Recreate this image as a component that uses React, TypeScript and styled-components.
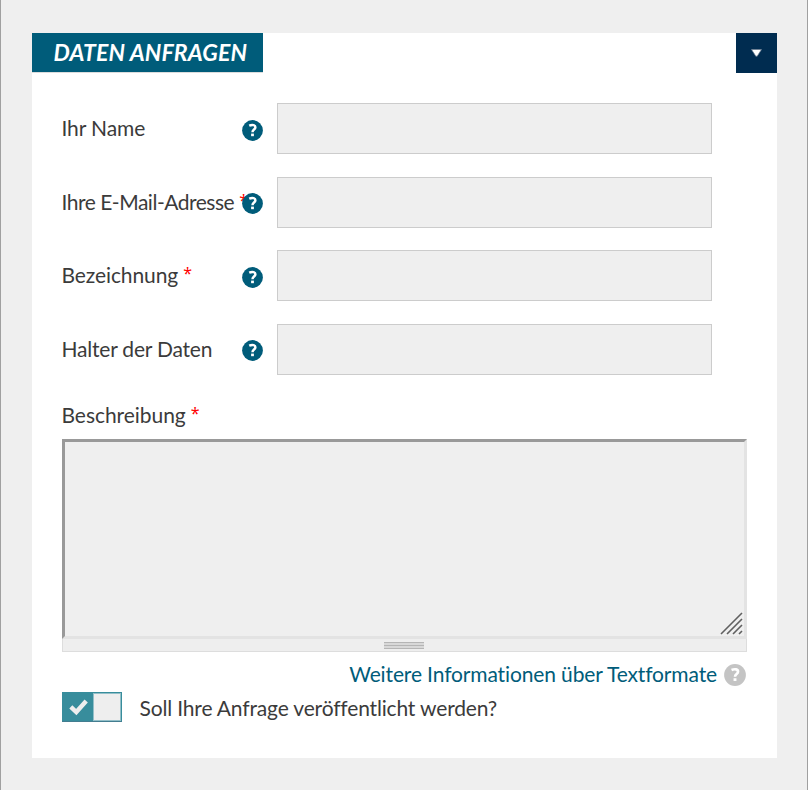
import React from 'react';
import styled, { createGlobalStyle } from 'styled-components';

const GlobalStyle = createGlobalStyle`
  *, *::before, *::after { box-sizing: border-box; }
  body {
    margin: 0;
    background: #efefef;
    color: #3b3b3b;
    font-family: Lato, "Noto Sans", sans-serif;
    font-size: 21px;
  }
`;

const Page = styled.main`
  height: 790px;
  padding: 33px 30px 0 31px;
  border-left: 1px solid #a0a0a0;
  border-right: 1px solid #a0a0a0;
  overflow: hidden;
`;

const Panel = styled.section`
  width: 745px;
  height: 725px;
  background: #fff;
`;

const PanelHeader = styled.header`
  display: flex;
  justify-content: space-between;
  align-items: flex-start;
  height: 70px;
`;

const Title = styled.h2`
  margin: 0;
  width: 231px;
  height: 40px;
  padding-left: 22px;
  background: #005c7a;
  border-bottom: 1px solid #dcdcdc;
  color: #fff;
  font-size: 23px;
  font-weight: 700;
  font-style: italic;
  line-height: 39px;
  white-space: nowrap;
`;

const Toggle = styled.button`
  display: flex;
  align-items: center;
  justify-content: center;
  width: 41px;
  height: 40px;
  padding: 0;
  border: 0;
  background: #002c50;
`;

const Form = styled.form`
  padding: 0 30px;
`;

const Fields = styled.div`
  display: grid;
  row-gap: 22.6px;
`;

const FieldRow = styled.div`
  display: grid;
  grid-template-columns: 180px 35px 435px;
  height: 51px;
`;

const Label = styled.label`
  height: 51px;
  line-height: 49px;
  white-space: nowrap;
`;

const Spaced = styled.span<{ $spacing?: number }>`
  margin-left: -0.5px;
  letter-spacing: ${({ $spacing = 0 }) => $spacing}px;
`;

const Required = styled.span`
  margin-left: 5px;
  color: #f00;
  font-family: "Noto Sans", sans-serif;
  font-size: 16px;
  line-height: 1;
  vertical-align: 4px;
`;

const HelpSlot = styled.span`
  position: relative;
  padding-top: 16.6px;
  line-height: 0;
`;

const Input = styled.input`
  width: 435px;
  height: 51px;
  border: 1px solid #ccc;
  border-radius: 0;
  background: #efefef;
  outline: 0;
`;

const DescriptionLabel = styled.label`
  display: block;
  height: 64px;
  padding-top: 25px;
  line-height: 30px;
`;

const EditorFrame = styled.div`
  position: relative;
`;

const TextArea = styled.textarea`
  display: block;
  width: 685px;
  height: 200px;
  border: 3px solid;
  border-color: #999 #e3e3e3 #e3e3e3 #999;
  background: #efefef;
  resize: none;
  outline: 0;
`;

const Resizer = styled.svg`
  position: absolute;
  right: 3px;
  bottom: 3px;
`;

const Grippie = styled.div`
  display: flex;
  justify-content: center;
  height: 13px;
  padding: 3px 2px 0 0;
  border: 1px solid #ddd;
  border-top: 0;
  background: #eee;
`;

const FormatRow = styled.div`
  display: flex;
  justify-content: flex-end;
  height: 40px;
  gap: 7px;
  padding-right: 1px;
`;

const FormatLink = styled.a`
  height: 44px;
  line-height: 44px;
  color: #005c7a;
  white-space: nowrap;
`;

const FormatHelp = styled.span`
  padding-top: 12px;
  line-height: 0;
`;

const PublishRow = styled.div`
  display: flex;
  gap: 18px;
  height: 30px;
`;

const Switch = styled.span`
  display: flex;
  width: 60px;
  height: 30px;
  background: #388d9c;
  border-bottom: 1px solid #437d90;
`;

const SwitchCheck = styled.span`
  width: 31px;
  height: 29px;
`;

const SwitchKnob = styled.span`
  width: 28px;
  height: 28px;
  margin-top: 1px;
  border: 1px solid #93bfc8;
  background: #eee;
`;

const PublishLabel = styled.label`
  line-height: 31px;
  white-space: nowrap;
`;

function HelpIcon({ size = 21, color = '#005c7a', mark = '#fff' }: { size?: number; color?: string; mark?: string }) {
  return (
    <svg width={size} height={size} viewBox="0 0 21 21">
      <circle cx="10.5" cy="10.5" r="10.4" fill={color} />
      <path d="M7.2 5.7C10.4 4.3 13.4 5 13.4 7.3C13.4 9.6 10.5 9.5 10.5 12.2" fill="none" stroke={mark} strokeWidth="2.5" />
      <rect x="9.1" y="13.6" width="2.8" height="2.6" fill={mark} />
    </svg>
  );
}

const fields = [
  { id: 'name', label: 'Ihr Name', spacing: -0.1, required: false },
  { id: 'email', label: 'Ihre E-Mail-Adresse', spacing: -0.48, required: true },
  { id: 'title', label: 'Bezeichnung', spacing: -0.1, required: true },
  { id: 'owner', label: 'Halter der Daten', spacing: -0.2, required: false },
];

export default function App() {
  return (
    <>
      <GlobalStyle />
      <Page>
        <Panel>
          <PanelHeader>
            <Title><Spaced $spacing={0.15}>DATEN ANFRAGEN</Spaced></Title>
            <Toggle type="button" aria-label="Formular einklappen">
              <svg width="11" height="8" viewBox="0 0 11 8">
                <path d="M.5.5h10L6.2 7.2H4.8z" fill="#fff" stroke="#66788c" strokeWidth=".7" />
              </svg>
            </Toggle>
          </PanelHeader>
          <Form>
            <Fields>
              {fields.map((field) => (
                <FieldRow key={field.id}>
                  <Label htmlFor={field.id}>
                    <Spaced $spacing={field.spacing}>{field.label}</Spaced>
                    {field.required && <Required>*</Required>}
                  </Label>
                  <HelpSlot><HelpIcon /></HelpSlot>
                  <Input id={field.id} />
                </FieldRow>
              ))}
            </Fields>
            <DescriptionLabel htmlFor="description">
              <Spaced $spacing={-0.05}>Beschreibung</Spaced>
              <Required>*</Required>
            </DescriptionLabel>
            <EditorFrame>
              <TextArea id="description" />
              <Resizer width="24" height="24" viewBox="0 0 24 24">
                <path d="M1 22L22 1M7 22L22 7M13 22L22 13M19 22L22 19" fill="none" stroke="#606060" strokeWidth="1.6" />
              </Resizer>
            </EditorFrame>
            <Grippie>
              <svg width="40" height="7" viewBox="0 0 40 7">
                <path d="M0 0h40v7H0z" fill="#d8d8d8" />
                <path d="M0 .5h40M0 3.5h40M0 6.5h40" stroke="#b5b5b5" />
              </svg>
            </Grippie>
            <FormatRow>
              <FormatLink><Spaced $spacing={-0.13}>Weitere Informationen über Textformate</Spaced></FormatLink>
              <FormatHelp><HelpIcon size={22} color="#c4c4c4" /></FormatHelp>
            </FormatRow>
            <PublishRow>
              <Switch>
                <SwitchCheck>
                  <svg width="31" height="29" viewBox="0 0 31 29">
                    <path d="M8.8 14.8L14.3 20L24.2 9" fill="none" stroke="#eee" strokeWidth="4.4" />
                  </svg>
                </SwitchCheck>
                <SwitchKnob />
              </Switch>
              <PublishLabel><Spaced $spacing={-0.16}>Soll Ihre Anfrage veröffentlicht werden?</Spaced></PublishLabel>
            </PublishRow>
          </Form>
        </Panel>
      </Page>
    </>
  );
}
